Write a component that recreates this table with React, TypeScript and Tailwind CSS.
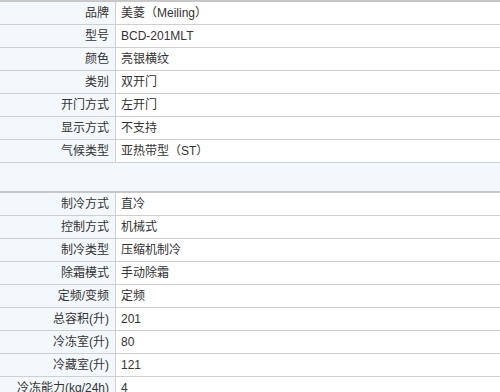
const top: [string, string][] = [
  ['品牌', '美菱（Meiling）'],
  ['型号', 'BCD-201MLT'],
  ['颜色', '亮银横纹'],
  ['类别', '双开门'],
  ['开门方式', '左开门'],
  ['显示方式', '不支持'],
  ['气候类型', '亚热带型（ST）'],
];

const bottom: [string, string][] = [
  ['制冷方式', '直冷'],
  ['控制方式', '机械式'],
  ['制冷类型', '压缩机制冷'],
  ['除霜模式', '手动除霜'],
  ['定频/变频', '定频'],
  ['总容积(升)', '201'],
  ['冷冻室(升)', '80'],
  ['冷藏室(升)', '121'],
  ['冷冻能力(kg/24h)', '4'],
];

function Row({ label, value }: { label: string; value: string }) {
  return (
    <div className="flex h-[23px] border-b border-[#cfcfcf]">
      <div className="w-[116px] shrink-0 bg-[#f3f8fc] border-r border-[#cfcfcf] flex items-center justify-end pr-[6px] whitespace-nowrap">
        {label}
      </div>
      <div className="flex-1 bg-white flex items-center pl-[5px]">{value}</div>
    </div>
  );
}

export default function App() {
  return (
    <div
      className="w-[500px] h-[392px] overflow-hidden bg-white text-[12px] leading-none text-[#333]"
      style={{ fontFamily: '"Liberation Sans", "Noto Sans CJK SC", sans-serif' }}
    >
      <div className="border-t-2 border-[#c8c8c8]">
        {top.map(([l, v]) => (
          <Row key={l} label={l} value={v} />
        ))}
      </div>
      {/* blank group separator */}
      <div className="h-[30px] bg-[#f3f8fc] border-b-2 border-[#c8c8c8]" />
      <div>
        {bottom.map(([l, v]) => (
          <Row key={l} label={l} value={v} />
        ))}
      </div>
    </div>
  );
}
